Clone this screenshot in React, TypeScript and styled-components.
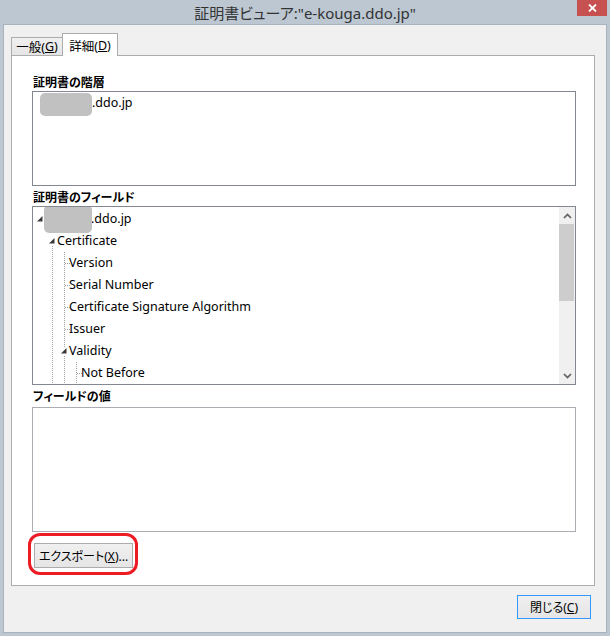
import React from 'react';
import styled, {createGlobalStyle} from 'styled-components';

const UI_FONT = `'Noto Sans', 'Noto Sans CJK JP', sans-serif`;

const GlobalStyle = createGlobalStyle`
    html, body {
        margin: 0;
        padding: 0;
        background: #bcc7d2;
    }
    body {
        font-family: ${UI_FONT};
    }
`;

type FieldNode = {
    label: string;
    redacted?: boolean;
    children?: FieldNode[];
}

type FieldRow = {
    node: FieldNode;
    depth: number;
    rails: boolean[];
    hasNext: boolean;
    first: boolean;
}

// rows that fit in the tree box before it needs scrolling
const VISIBLE_ROWS = 8;

const fields: FieldNode = {
    label: '.ddo.jp',
    redacted: true,
    children: [
        {
            label: 'Certificate',
            children: [
                {label: 'Version'},
                {label: 'Serial Number'},
                {label: 'Certificate Signature Algorithm'},
                {label: 'Issuer'},
                {
                    label: 'Validity',
                    children: [
                        {label: 'Not Before'},
                        {label: 'Not After'},
                    ],
                },
                {label: 'Subject'},
                {label: 'Subject Public Key Info'},
            ],
        },
        {label: 'Certificate Signature Algorithm'},
        {label: 'Certificate Signature Value'},
    ],
};

// walk the tree into visible rows, remembering which ancestor rails keep going
function flatten(node: FieldNode, depth: number, rails: boolean[], hasNext: boolean, first: boolean, out: FieldRow[]) {
    out.push({node, depth, rails, hasNext, first});
    const kids = node.children || [];
    kids.forEach((child, i) => {
        flatten(child, depth + 1, [...rails, hasNext], i < kids.length - 1, i === 0, out);
    });
    return out;
}

const rows = flatten(fields, 0, [], false, true, []).slice(0, VISIBLE_ROWS);

const Window = styled.div`
    width: 610px;
    height: 636px;
    box-sizing: border-box;
    padding: 0 3px 3px;
    background: #bcc7d2;
    display: flex;
    flex-direction: column;
    font-family: ${UI_FONT};
    font-feature-settings: 'palt';
    color: #000;
`;

const TitleBar = styled.div`
    height: 24px;
    flex: none;
    display: grid;
    grid-template-columns: 1fr auto 1fr;
`;

const TitleText = styled.div`
    grid-column: 2;
    font-size: 15px;
    line-height: 24px;
    padding-top: 1px;
    color: #333;
    white-space: nowrap;
`;

const CloseButton = styled.div`
    grid-column: 3;
    justify-self: end;
    align-self: start;
    width: 30px;
    height: 16px;
    background: #c75050;
    display: flex;
    align-items: center;
    justify-content: center;
`;

const Client = styled.div`
    flex: 1;
    display: flex;
    flex-direction: column;
    background: #f0f0f0;
    border: 1px solid #a9b3bd;
    padding: 8px 11px 13px 7px;
    min-height: 0;
`;

const TabStrip = styled.div`
    height: 22px;
    flex: none;
    display: flex;
    align-items: flex-end;
`;

const Tab = styled.div<{$active?: boolean}>`
    position: relative;
    z-index: ${(p) => (p.$active ? 1 : 0)};
    box-sizing: border-box;
    width: ${(p) => (p.$active ? 56 : 51)}px;
    height: ${(p) => (p.$active ? 23 : 18)}px;
    margin-bottom: ${(p) => (p.$active ? -1 : 0)}px;
    border: 1px solid #acacac;
    border-bottom: none;
    border-right: ${(p) => (p.$active ? '1px solid #acacac' : 'none')};
    background: ${(p) => (p.$active ? '#fff' : 'linear-gradient(#f0f0f0, #e5e5e5)')};
    display: flex;
    align-items: center;
    justify-content: center;
    font-size: 12.5px;
    white-space: nowrap;
`;

const Panel = styled.div`
    flex: 1;
    min-height: 0;
    display: flex;
    flex-direction: column;
    background: #fff;
    border: 1px solid #adadad;
    padding: 19px 18px 0 20px;
`;

const SectionLabel = styled.div`
    font-size: 12px;
    font-weight: bold;
    line-height: 16px;
    padding-left: 1px;
    margin-top: 4px;
    white-space: nowrap;

    &:first-child {
        margin-top: 0;
    }
`;

const Box = styled.div<{$height: number; $light?: boolean}>`
    box-sizing: border-box;
    height: ${(p) => p.$height}px;
    flex: none;
    border: 1px solid ${(p) => (p.$light ? '#abadb3' : '#828790')};
    background: #fff;
    overflow: hidden;
`;

const ValueBox = styled(Box)`
    margin-top: 2px;
`;

const TreeBox = styled(Box)`
    display: flex;
`;

const HierarchyRow = styled.div`
    display: flex;
    align-items: flex-start;
    height: 20px;
    padding: 1px 0 0 7px;
`;

const Redacted = styled.span<{$w: number; $h: number; $top: number}>`
    flex: none;
    width: ${(p) => p.$w}px;
    height: ${(p) => p.$h}px;
    margin-top: ${(p) => p.$top}px;
    background: #c1c1c1;
    border-radius: 5px;
    filter: blur(0.5px);
`;

const ItemText = styled.span`
    font-size: 12.5px;
    line-height: 20px;
    white-space: nowrap;
`;

const TreeViewport = styled.div`
    flex: 1;
    min-width: 0;
    overflow: hidden;
    padding: 1px 0 0 1px;
`;

const TreeRow = styled.div`
    display: flex;
    align-items: flex-start;
    height: 22px;
    white-space: nowrap;
`;

const RowText = styled(ItemText)`
    line-height: 22px;
    margin-left: -1px;
`;

const RootRedacted = styled(Redacted)`
    margin-left: -2px;
`;

const Scrollbar = styled.div`
    width: 16px;
    flex: none;
    display: flex;
    flex-direction: column;
    background: #f0f0f0;
`;

const ScrollArrow = styled.div`
    height: 17px;
    flex: none;
    display: flex;
    align-items: center;
    justify-content: center;
`;

const ScrollTrack = styled.div`
    flex: 1;
`;

const ScrollThumb = styled.div`
    height: 77px;
    margin-right: 1px;
    background: #cdcdcd;
`;

const ExportRow = styled.div`
    margin-top: 11px;
    padding-left: 2px;
    display: flex;
`;

// red marker ring drawn around the export button
const Marked = styled.span`
    position: relative;
    display: inline-flex;

    &::after {
        content: '';
        position: absolute;
        inset: -10px -5px -7px -6px;
        border: 3px solid #ed1c24;
        border-radius: 12px;
        pointer-events: none;
    }
`;

const PushButton = styled.button<{$width: number; $height: number; $default?: boolean}>`
    box-sizing: border-box;
    width: ${(p) => p.$width}px;
    height: ${(p) => p.$height}px;
    padding: 0;
    border: 1px solid ${(p) => (p.$default ? '#3399ff' : '#acacac')};
    border-radius: 0;
    background: linear-gradient(#f0f0f0, #e5e5e5);
    font-family: ${UI_FONT};
    font-feature-settings: 'palt';
    font-size: 12px;
    color: #000;
    white-space: nowrap;
`;

const Footer = styled.div`
    flex: none;
    margin-top: 9px;
    padding-right: 4px;
    display: flex;
    justify-content: flex-end;
`;

const DOT = '#a0a0a0';

function Rail({up, down, branch, expander}: {up?: boolean; down?: boolean; branch?: boolean; expander?: boolean}) {
    return (
        <svg
            width={12}
            height={22}
            style={{flex: 'none'}}
        >
            {up && (
                <line
                    x1={6.5}
                    x2={6.5}
                    y1={0}
                    y2={expander ? 7 : 12}
                    stroke={DOT}
                    strokeDasharray='1 1'
                />
            )}
            {down && (
                <line
                    x1={6.5}
                    x2={6.5}
                    y1={expander ? 16 : 12}
                    y2={22}
                    stroke={DOT}
                    strokeDasharray='1 1'
                />
            )}
            {branch && (
                <line
                    x1={7}
                    x2={12}
                    y1={11.5}
                    y2={11.5}
                    stroke={DOT}
                    strokeDasharray='1 1'
                />
            )}
            {expander && (
                <polygon
                    points='8.5,8 8.5,13.5 3,13.5'
                    fill='#3a3a3a'
                />
            )}
        </svg>
    );
}

function Chevron({down}: {down?: boolean}) {
    return (
        <svg
            width={9}
            height={6}
        >
            <polyline
                points={down ? '1,1 4.5,4.5 8,1' : '1,5 4.5,1.5 8,5'}
                fill='none'
                stroke='#606060'
                strokeWidth={1.7}
            />
        </svg>
    );
}

function FieldTreeRow({row}: {row: FieldRow}) {
    const {node, depth, rails, hasNext, first} = row;
    const expander = Boolean(node.children);
    const up = depth > 0 && !(depth === 1 && first);
    return (
        <TreeRow>
            {rails.slice(0, depth).map((on, i) => (
                <Rail
                    key={i}
                    up={on}
                    down={on}
                />
            ))}
            <Rail
                up={up}
                down={hasNext}
                branch={!expander}
                expander={expander}
            />
            {node.redacted && (
                <RootRedacted
                    $w={48}
                    $h={28}
                    $top={-3}
                />
            )}
            <RowText>{node.label}</RowText>
        </TreeRow>
    );
}

export default function App() {
    return (
        <>
            <GlobalStyle/>
            <Window>
                <TitleBar>
                    <TitleText>{'証明書ビューア:"e-kouga.ddo.jp"'}</TitleText>
                    <CloseButton>
                        <svg
                            width={9}
                            height={8}
                        >
                            <path
                                d='M1 0.5 L8 7.5 M8 0.5 L1 7.5'
                                stroke='#fff'
                                strokeWidth={1.8}
                            />
                        </svg>
                    </CloseButton>
                </TitleBar>
                <Client>
                    <TabStrip>
                        <Tab>一般(<u>G</u>)</Tab>
                        <Tab $active={true}>詳細(<u>D</u>)</Tab>
                    </TabStrip>
                    <Panel>
                        <SectionLabel>証明書の階層</SectionLabel>
                        <Box $height={95}>
                            <HierarchyRow>
                                <Redacted
                                    $w={52}
                                    $h={23}
                                    $top={0}
                                />
                                <ItemText>.ddo.jp</ItemText>
                            </HierarchyRow>
                        </Box>
                        <SectionLabel>証明書のフィールド</SectionLabel>
                        <TreeBox $height={179}>
                            <TreeViewport>
                                {rows.map((row, i) => (
                                    <FieldTreeRow
                                        key={i}
                                        row={row}
                                    />
                                ))}
                            </TreeViewport>
                            <Scrollbar>
                                <ScrollArrow><Chevron/></ScrollArrow>
                                <ScrollTrack>
                                    <ScrollThumb/>
                                </ScrollTrack>
                                <ScrollArrow><Chevron down={true}/></ScrollArrow>
                            </Scrollbar>
                        </TreeBox>
                        <SectionLabel>フィールドの値</SectionLabel>
                        <ValueBox
                            $height={125}
                            $light={true}
                        />
                        <ExportRow>
                            <Marked>
                                <PushButton
                                    type='button'
                                    $width={99}
                                    $height={25}
                                >
                                    エクスポート(<u>X</u>)...
                                </PushButton>
                            </Marked>
                        </ExportRow>
                    </Panel>
                    <Footer>
                        <PushButton
                            type='button'
                            $width={74}
                            $height={24}
                            $default={true}
                        >
                            閉じる(<u>C</u>)
                        </PushButton>
                    </Footer>
                </Client>
            </Window>
        </>
    );
}
